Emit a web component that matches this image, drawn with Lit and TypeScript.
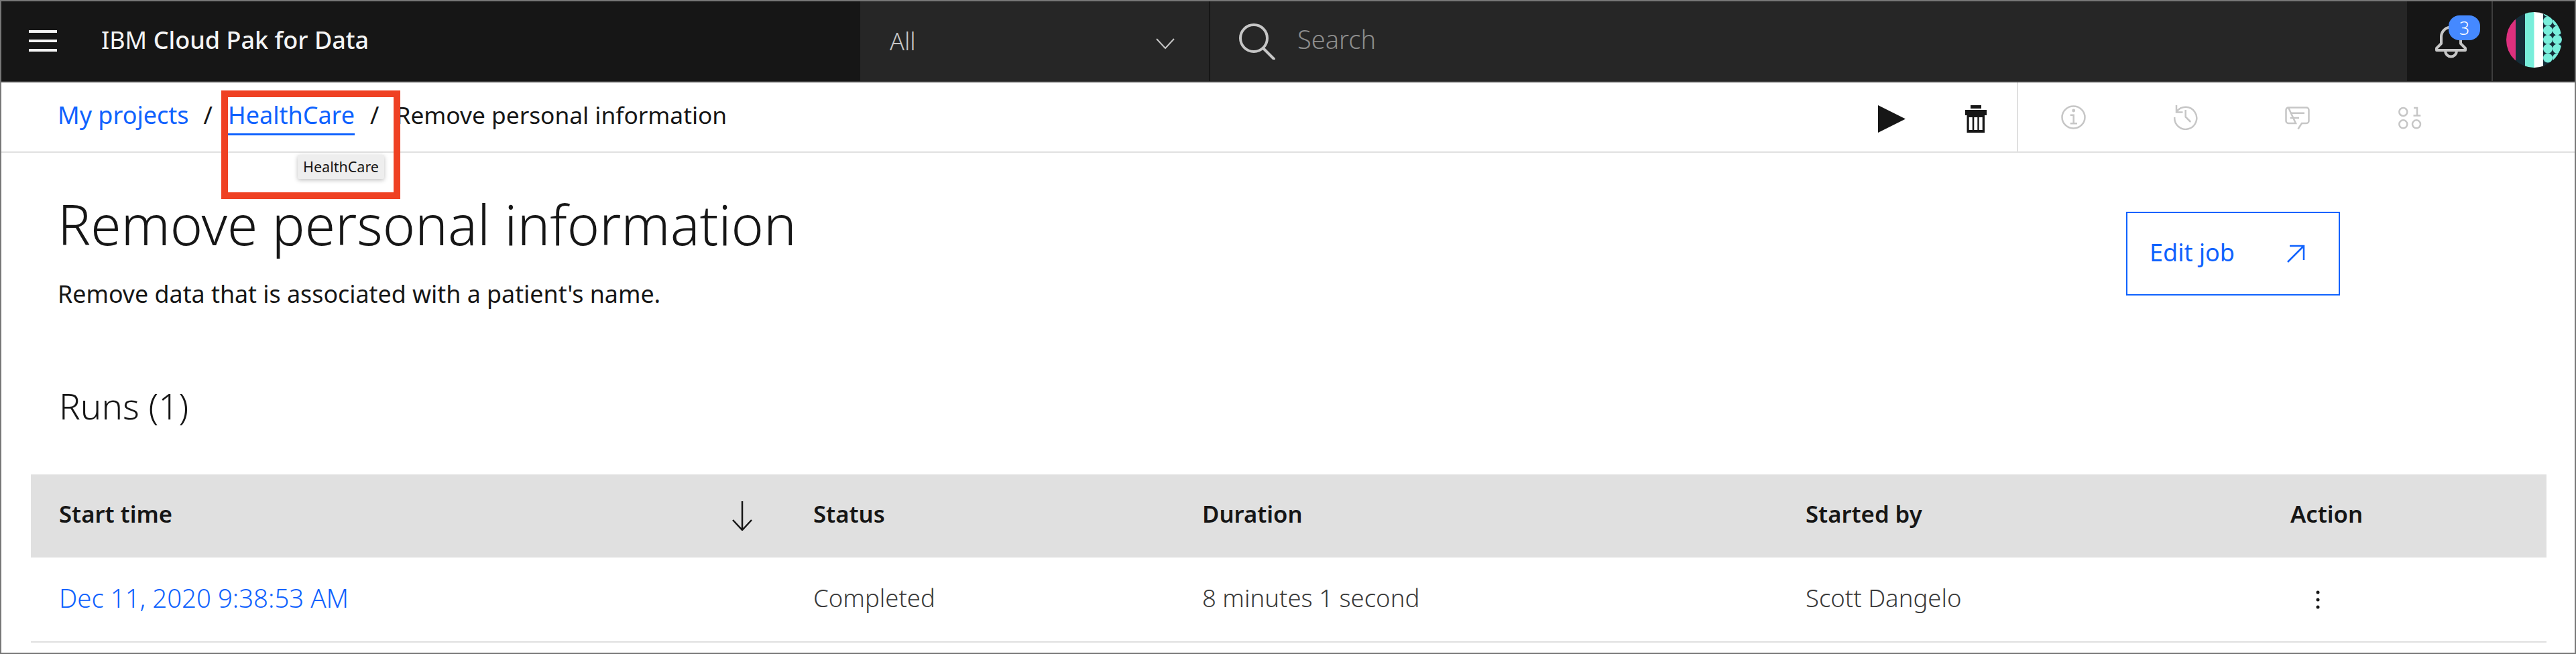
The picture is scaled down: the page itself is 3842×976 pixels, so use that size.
import { LitElement, html, svg, css } from 'lit';
import { customElement } from 'lit/decorators.js';

const dotCols = [62, 76];
const dotRows = [0, 1, 2, 3, 4, 5];

@customElement('app-root')
export class AppRoot extends LitElement {
  static styles = css`
    * {
      box-sizing: border-box;
      margin: 0;
      padding: 0;
    }

    :host {
      box-sizing: border-box;
      display: block;
      position: relative;
      width: 3842px;
      height: 976px;
      border: 2px solid #777;
      overflow: hidden;
      background: #fff;
      color: #161616;
      font-family: 'Noto Sans', Roboto, sans-serif;
    }

    svg {
      display: block;
      flex: none;
    }

    a {
      color: #0f62fe;
      text-decoration: none;
    }

    header {
      display: flex;
      height: 121px;
      background: #161616;
      border-bottom: 2px solid #3d3d3d;
    }

    .menu {
      margin-left: 41px;
      align-self: center;
      margin-top: -1px;
    }

    .brand {
      margin-left: 64px;
      width: 1132px;
      align-self: center;
      margin-top: -5px;
      color: #f4f4f4;
      font-size: 36px;
      white-space: nowrap;
    }

    .brand b {
      font-weight: 500;
    }

    .scope {
      display: flex;
      align-items: center;
      width: 522px;
      padding: 0 51px 0 44px;
      justify-content: space-between;
      background: #262626;
      border-right: 2px solid #161616;
      color: #c6c6c6;
      font-size: 36px;
      font-weight: 300;
    }

    .scope svg {
      margin-top: 7px;
    }

    .search {
      flex: 1;
      display: flex;
      align-items: center;
      gap: 33px;
      padding-left: 43px;
      background: #262626;
      color: #8d8d8d;
      font-size: 38px;
      font-weight: 300;
    }

    .search span {
      margin-top: -7px;
    }

    .bell {
      position: relative;
      width: 128px;
      border-right: 2px solid #3d3d3d;
    }

    .bell svg {
      margin: 37px 0 0 42px;
    }

    .badge {
      position: absolute;
      left: 62px;
      top: 21px;
      width: 47px;
      height: 37px;
      border-radius: 16px;
      background: #4589ff;
      color: #fff;
      font-size: 27px;
      font-weight: 300;
      line-height: 37px;
      text-align: center;
    }

    .avatar {
      margin: 16px 18px 0 20px;
    }

    .crumbs {
      display: flex;
      height: 105px;
      border-bottom: 2px solid #e0e0e0;
    }

    .trail {
      flex: 1;
      display: flex;
      align-items: baseline;
      padding: 24px 0 0 84px;
      font-size: 36px;
      color: #161616;
      white-space: nowrap;
    }

    .trail .current {
      padding-bottom: 3px;
      border-bottom: 3px solid #0f62fe;
    }

    .trail .page {
      font-size: 35.300px;
    }

    .sep {
      margin: 0 23px 0 22px;
    }

    .sep.last {
      margin: 0 25px 0 23px;
    }

    .actions {
      display: flex;
      align-items: flex-start;
      width: 207px;
      padding-top: 34px;
    }

    .actions .trash {
      margin-left: 88px;
    }

    .tools {
      display: flex;
      align-items: flex-start;
      width: 832px;
      height: 103px;
      padding: 34px 0 0 64px;
      border-left: 2px solid #e0e0e0;
    }

    .tools svg + svg {
      margin-left: 130px;
    }

    .head {
      display: flex;
      justify-content: space-between;
      padding: 62px 350px 0 84px;
      height: 340px;
    }

    h1 {
      font-size: 82px;
      font-weight: 300;
      line-height: 100px;
      margin-top: -6px;
    }

    .head p {
      margin-top: 31px;
      font-size: 35.800px;
      line-height: 46px;
    }

    .edit {
      display: flex;
      align-items: center;
      justify-content: space-between;
      width: 319px;
      height: 125px;
      margin-top: 26px;
      padding: 0 50px 4px 33px;
      border: 2px solid #0f62fe;
      font-size: 36px;
    }

    .edit svg {
      margin-top: 4px;
    }

    h2 {
      height: 140px;
      padding: 8px 0 0 86px;
      font-size: 53px;
      font-weight: 300;
      line-height: 60px;
    }

    .table {
      margin: 0 42px 0 44px;
    }

    .row {
      display: grid;
      grid-template-columns: 1125px 580px 900px 723px 1fr;
      padding-left: 42px;
      align-items: center;
    }

    .row.top {
      height: 124px;
      background: #e0e0e0;
      font-size: 34.700px;
      font-weight: 600;
    }

    .row.top > div {
      margin-top: -7px;
    }

    .row.top .sortable {
      margin-top: 0;
    }

    .row.top .sortable span {
      margin-top: -7px;
    }

    .row.body {
      height: 127px;
      border-bottom: 2px solid #e0e0e0;
      color: #393939;
      font-size: 36.500px;
      font-weight: 300;
    }

    .row.body > div,
    .row.body > a {
      margin-top: -5px;
    }

    .row.body > a {
      font-size: 38.400px;
    }

    .sortable {
      display: flex;
      align-items: center;
      justify-content: space-between;
      padding-right: 91px;
    }

    .kebab {
      margin-left: 36px;
    }

    .callout {
      position: absolute;
      left: 328px;
      top: 133px;
      width: 267px;
      height: 162px;
      border: 10px solid #ef4123;
    }

    .tip {
      position: absolute;
      left: 442px;
      top: 229px;
      width: 129px;
      height: 36px;
      border-radius: 2px;
      background: #eee;
      box-shadow: 0 2px 6px rgba(0, 0, 0, 0.25);
      color: #161616;
      font-size: 21.500px;
      line-height: 36px;
      text-align: center;
    }
  `;

  render() {
    return html`
      <header>
        <svg class="menu" width="44" height="34" viewBox="0 0 44 34" fill="#f4f4f4">
          <rect y="1" width="42" height="4" />
          <rect y="15" width="42" height="4" />
          <rect y="29" width="42" height="4" />
        </svg>
        <div class="brand">IBM <b>Cloud Pak for Data</b></div>
        <div class="scope">
          <span>All</span>
          <svg width="28" height="17" viewBox="0 0 28 17" fill="none" stroke="#c6c6c6" stroke-width="2">
            <path d="M1 1l13 14L27 1" />
          </svg>
        </div>
        <div class="search">
          <svg width="54" height="54" viewBox="0 0 54 54" fill="none" stroke="#c6c6c6" stroke-width="4">
            <circle cx="22" cy="22" r="20" />
            <path d="M36 37l16 16" stroke-linecap="round" />
          </svg>
          <span>Search</span>
        </div>
        <div class="bell">
          <svg width="47" height="48" viewBox="0 0 47 48" fill="none" stroke="#c6c6c6" stroke-width="4">
            <path d="M2 36v-3l7-7V16a14.500 14.500 0 0 1 29 0v10l7 7v3z" stroke-linejoin="round" />
            <path d="M15 37a8.500 8.500 0 0 0 17 0" />
          </svg>
          <div class="badge">3</div>
        </div>
        <svg class="avatar" width="84" height="84" viewBox="0 0 84 84">
          <defs>
            <clipPath id="disc"><circle cx="41.500" cy="41.500" r="41.500" /></clipPath>
          </defs>
          <g clip-path="url(#disc)">
            <rect width="14" height="84" fill="#dc307e" />
            <rect x="14" width="14" height="84" fill="#152c38" />
            <rect x="28" width="14" height="84" fill="#79eedb" />
            <rect x="41.500" width="14" height="84" fill="#fff" />
            <rect x="55" width="29" height="84" fill="#152c38" />
            ${dotCols.map((cx) =>
              dotRows.map(
                (row) => svg`<circle cx="${cx}" cy="${row * 13.7}" r="7" fill="#79eedb" />`
              )
            )}
          </g>
        </svg>
      </header>

      <nav class="crumbs">
        <div class="trail">
          <a href="#">My projects</a>
          <span class="sep">/</span>
          <a href="#" class="current">HealthCare</a>
          <span class="sep last">/</span>
          <span class="page">Remove personal information</span>
        </div>
        <div class="actions">
          <svg class="play" width="42" height="41" viewBox="0 0 42 41" fill="#161616">
            <path d="M0 0l41 20.500L0 41z" />
          </svg>
          <svg class="trash" width="32" height="41" viewBox="0 0 32 41" fill="#161616">
            <rect x="8" width="16" height="5" />
            <rect y="7" width="32" height="8" />
            <path d="M2.500 15H29v26H2.500z" />
            <path d="M5.700 18h5v19h-5zM13.300 18h5v19h-5zM20.700 18h5v19h-5z" fill="#fff" />
          </svg>
        </div>
        <div class="tools">
          <svg width="37" height="37" viewBox="0 0 37 37" fill="none" stroke="#c6c6c6" stroke-width="2.500">
            <ellipse cx="18.500" cy="18" rx="17" ry="16.500" />
            <path d="M13.700 14.700h5v12.600M13.700 27.300H24" />
            <circle cx="18.700" cy="8" r="1.200" fill="#c6c6c6" />
          </svg>
          <svg width="37" height="37" viewBox="0 0 37 37" fill="none" stroke="#c6c6c6" stroke-width="2.500">
            <path d="M5 0v10.500h9.500M5.500 9.500A16.500 16.500 0 1 1 2.300 18" />
            <path d="M18.700 7v10.500l7.500 7.500" />
          </svg>
          <svg width="37" height="37" viewBox="0 0 37 37" fill="none" stroke="#c6c6c6" stroke-width="2.500">
            <path d="M5 3.500h27a3.500 3.500 0 0 1 3.500 3.500v16.500a3.500 3.500 0 0 1-3.500 3.500h-7l-5.500 8.500M16 27H5a3.500 3.500 0 0 1-3.500-3.500V7A3.500 3.500 0 0 1 5 3.500z" />
            <path d="M7.700 11.700H29M7.700 19H21" />
          </svg>
          <svg width="37" height="37" viewBox="0 0 37 37" fill="none" stroke="#c6c6c6" stroke-width="2.500">
            <circle cx="9.300" cy="10" r="6" />
            <path d="M25 4h5v11M24.500 15.500H35.300" />
            <circle cx="9.300" cy="28.300" r="6" />
            <circle cx="29" cy="28.300" r="6" />
          </svg>
        </div>
      </nav>

      <section class="head">
        <div>
          <h1>Remove personal information</h1>
          <p>Remove data that is associated with a patient's name.</p>
        </div>
        <a class="edit" href="#">
          <span>Edit job</span>
          <svg width="28" height="28" viewBox="0 0 28 28" fill="none" stroke="#0f62fe" stroke-width="2.500">
            <path d="M5 2h21v21M26 2L2 26" />
          </svg>
        </a>
      </section>

      <h2>Runs (1)</h2>

      <div class="table">
        <div class="row top">
          <div class="sortable">
            <span>Start time</span>
            <svg width="30" height="44" viewBox="0 0 30 44" fill="none" stroke="#161616" stroke-width="2.500">
              <path d="M15 0v42M1 28l14 15 14-15" />
            </svg>
          </div>
          <div>Status</div>
          <div>Duration</div>
          <div>Started by</div>
          <div>Action</div>
        </div>
        <div class="row body">
          <a href="#">Dec 11, 2020 9:38:53 AM</a>
          <div>Completed</div>
          <div>8 minutes 1 second</div>
          <div>Scott Dangelo</div>
          <svg class="kebab" width="10" height="28" viewBox="0 0 10 28" fill="#161616">
            <circle cx="5" cy="3" r="2.500" />
            <circle cx="5" cy="14" r="2.500" />
            <circle cx="5" cy="25" r="2.500" />
          </svg>
        </div>
      </div>

      <div class="callout"></div>
      <div class="tip">HealthCare</div>
    `;
  }
}
